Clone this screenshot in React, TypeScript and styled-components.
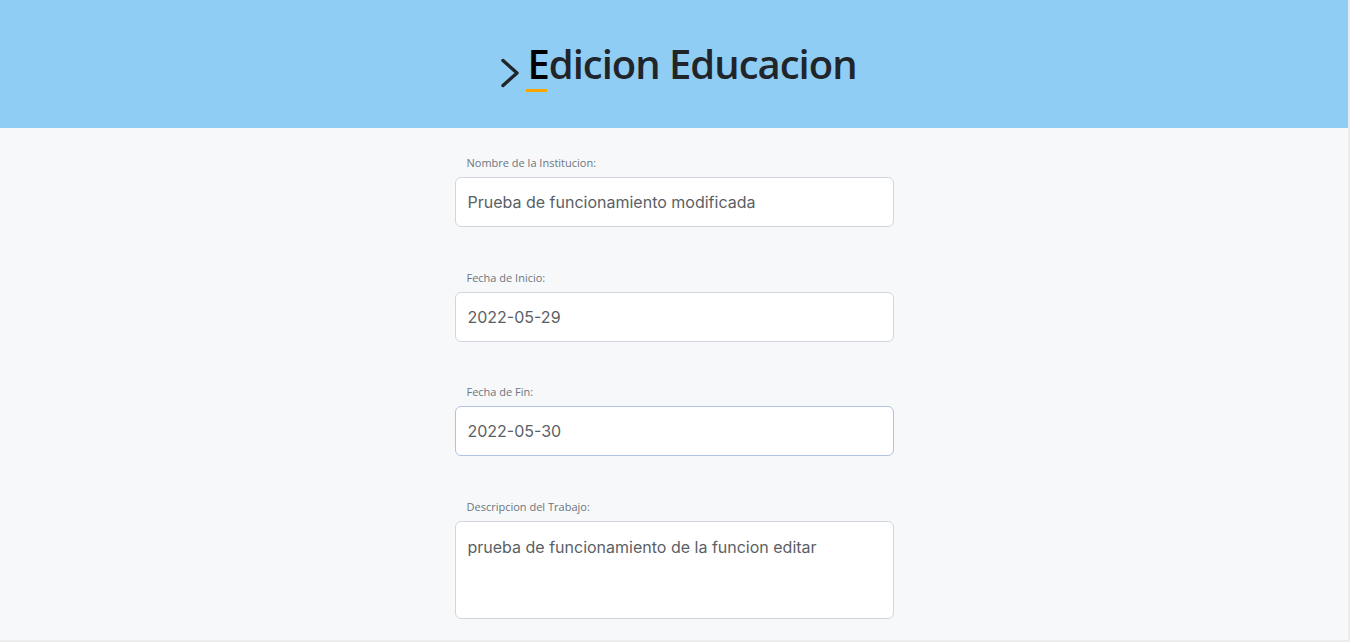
import styled, { createGlobalStyle } from "styled-components";

const fields = [
  { label: "Nombre de la Institucion:", value: "Prueba de funcionamiento modificada" },
  { label: "Fecha de Inicio:", value: "2022-05-29" },
  { label: "Fecha de Fin:", value: "2022-05-30", focused: true },
];

export default function App() {
  return (
    <>
      <GlobalStyle />
      <Page>
        <Header>
          <Title>
            <Chevron viewBox="0 0 20 30" aria-hidden>
              <path d="M3 2.5 L17 15 L3 27.5" />
            </Chevron>
            <FirstLetter>E</FirstLetter>dicion Educacion
          </Title>
        </Header>

        <Form>
          {fields.map((f) => (
            <Field key={f.label}>
              <Label>{f.label}</Label>
              <Input $focused={f.focused} defaultValue={f.value} />
            </Field>
          ))}
          <Field>
            <Label>Descripcion del Trabajo:</Label>
            <TextArea defaultValue="prueba de funcionamiento de la funcion editar" />
          </Field>
        </Form>
      </Page>
    </>
  );
}

const GlobalStyle = createGlobalStyle`
  html, body {
    margin: 0;
    padding: 0;
    background: #f7f8fa;
  }
  * {
    box-sizing: border-box;
  }
`;

const Page = styled.main`
  height: 642px;
  overflow: hidden;
  background: #f7f8fa;
  border-right: 2px solid #ececec;
  border-bottom: 2px solid #ececec;
  display: flex;
  flex-direction: column;
`;

const Header = styled.header`
  height: 128px;
  flex-shrink: 0;
  background: #90cdf4;
  display: flex;
  align-items: center;
  justify-content: center;
`;

const Title = styled.h1`
  margin: 0;
  padding-left: 9px;
  font-family: "Open Sans", "Noto Sans", sans-serif;
  font-weight: 600;
  font-size: 40px;
  line-height: 54px;
  letter-spacing: -1px;
  color: #212529;
  display: flex;
  align-items: center;
`;

const Chevron = styled.svg`
  width: 20px;
  height: 30px;
  margin-right: 7px;
  margin-top: 18px;
  fill: none;
  stroke: #212529;
  stroke-width: 3.4;
  stroke-linecap: round;
  stroke-linejoin: round;
`;

const FirstLetter = styled.span`
  position: relative;
  color: #000;

  &::after {
    content: "";
    position: absolute;
    left: -1px;
    bottom: -1px;
    width: 21px;
    height: 3px;
    background: #f7a600;
  }
`;

const Form = styled.section`
  width: 439px;
  margin: 0 auto;
  padding-top: 27px;
  display: flex;
  flex-direction: column;
  gap: 42.7px;
`;

const Field = styled.div`
  display: flex;
  flex-direction: column;
  gap: 6px;
`;

const Label = styled.label`
  padding-left: 12px;
  font-family: "Open Sans", "Noto Sans", sans-serif;
  font-size: 11px;
  line-height: 16px;
  color: #6c757d;
`;

const Input = styled.input<{ $focused?: boolean }>`
  height: 50px;
  width: 100%;
  padding: 0 12px;
  border: 1px solid ${({ $focused }) => ($focused ? "#afc3e0" : "#d2d6dc")};
  border-radius: 6px;
  background: #fff;
  font-family: Inter, "Noto Sans", sans-serif;
  font-size: 16px;
  color: #5a5f66;
  outline: none;
`;

const TextArea = styled.textarea`
  height: 98px;
  width: 100%;
  padding: 14px 12px;
  border: 1px solid #d2d6dc;
  border-radius: 6px;
  background: #fff;
  font-family: Inter, "Noto Sans", sans-serif;
  font-size: 16px;
  line-height: 22px;
  color: #5a5f66;
  resize: none;
  outline: none;
`;
